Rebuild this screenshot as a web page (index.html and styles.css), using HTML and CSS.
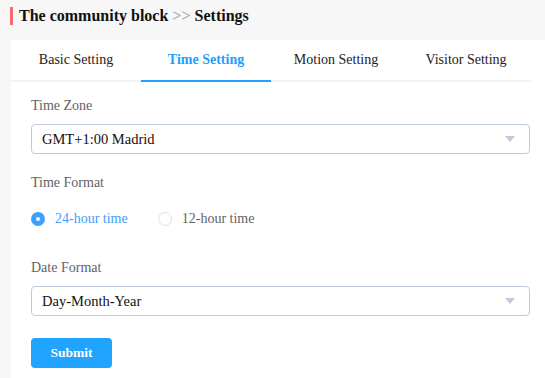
FILE: index.html
```html
<!DOCTYPE html>
<html lang="en">
<head>
    <meta charset="UTF-8">
    <title>Settings</title>
    <link rel="stylesheet" href="styles.css">
</head>
<body>
    <div class="crumb">
        <h1 class="crumb-title">The community block <span class="crumb-sep">&gt;&gt;</span> Settings</h1>
    </div>
    <div class="panel">
        <div class="tabs">
            <div class="tab">Basic Setting</div>
            <div class="tab active">Time Setting</div>
            <div class="tab">Motion Setting</div>
            <div class="tab">Visitor Setting</div>
        </div>
        <form class="form">
            <label class="label">Time Zone</label>
            <div class="select">
                <span>GMT+1:00 Madrid</span>
                <i class="arrow"></i>
            </div>
            <label class="label label-gap">Time Format</label>
            <div class="radios">
                <span class="radio checked"><i class="dot"></i>24-hour time</span>
                <span class="radio"><i class="dot"></i>12-hour time</span>
            </div>
            <label class="label label-gap-lg">Date Format</label>
            <div class="select">
                <span>Day-Month-Year</span>
                <i class="arrow"></i>
            </div>
            <button type="button" class="submit">Submit</button>
        </form>
    </div>
</body>
</html>
```

FILE: styles.css
```css
body {
    margin: 0;
    background-color: #f7f7f7;
    font-family: 'Liberation Serif', 'Times New Roman', serif;
    color: #333;
}
.crumb {
    height: 40px;
    padding: 7px 0 0 10px;
    box-sizing: border-box;
}
.crumb-title {
    margin: 0;
    font-size: 16px;
    line-height: 18px;
    font-weight: bold;
    color: #111;
    border-left: 3px solid #f56c6c;
    padding-left: 6px;
}
.crumb-sep {
    color: #aaa;
}
.panel {
    margin-left: 11px;
    background-color: white;
    min-height: 338px;
}
.tabs {
    display: flex;
    border-bottom: 2px solid #f2f2f2;
    width: 520px;
}
.tab {
    width: 130px;
    height: 40px;
    line-height: 40px;
    text-align: center;
    font-size: 14px;
    color: #222;
    margin-bottom: -2px;
    border-bottom: 2px solid transparent;
}
.tab.active {
    color: #20a0ff;
    font-weight: bold;
    border-bottom-color: #20a0ff;
}
.form {
    width: 499px;
    padding: 14px 0 0 20px;
    display: flex;
    flex-direction: column;
    align-items: flex-start;
}
.label {
    font-size: 14px;
    line-height: 20px;
    color: #606266;
    margin-bottom: 8px;
}
.label-gap {
    margin-top: 19px;
    margin-bottom: 16px;
}
.label-gap-lg {
    margin-top: 29px;
}
.select {
    width: 100%;
    height: 30px;
    box-sizing: border-box;
    border: 1px solid #bfcbd9;
    border-radius: 4px;
    display: flex;
    align-items: center;
    justify-content: space-between;
    padding: 0 14px 0 10px;
    font-size: 14.5px;
    color: #111;
}
.arrow {
    width: 0;
    height: 0;
    border-left: 5px solid transparent;
    border-right: 5px solid transparent;
    border-top: 6px solid #bfcbd9;
}
.radios {
    display: flex;
    gap: 30px;
    height: 20px;
    align-items: center;
}
.radio {
    display: flex;
    align-items: center;
    font-size: 14px;
    color: #606266;
}
.dot {
    width: 14px;
    height: 14px;
    box-sizing: border-box;
    border: 1px solid #dcdfe6;
    border-radius: 50%;
    margin-right: 10px;
    background-color: white;
}
.radio.checked {
    color: #409eff;
}
.radio.checked .dot {
    border: 5px solid #409eff;
}
.submit {
    margin-top: 22px;
    width: 81px;
    height: 30px;
    border: none;
    border-radius: 4px;
    background-color: #20a4ff;
    color: white;
    font-family: inherit;
    font-size: 13.5px;
    font-weight: bold;
}
```
